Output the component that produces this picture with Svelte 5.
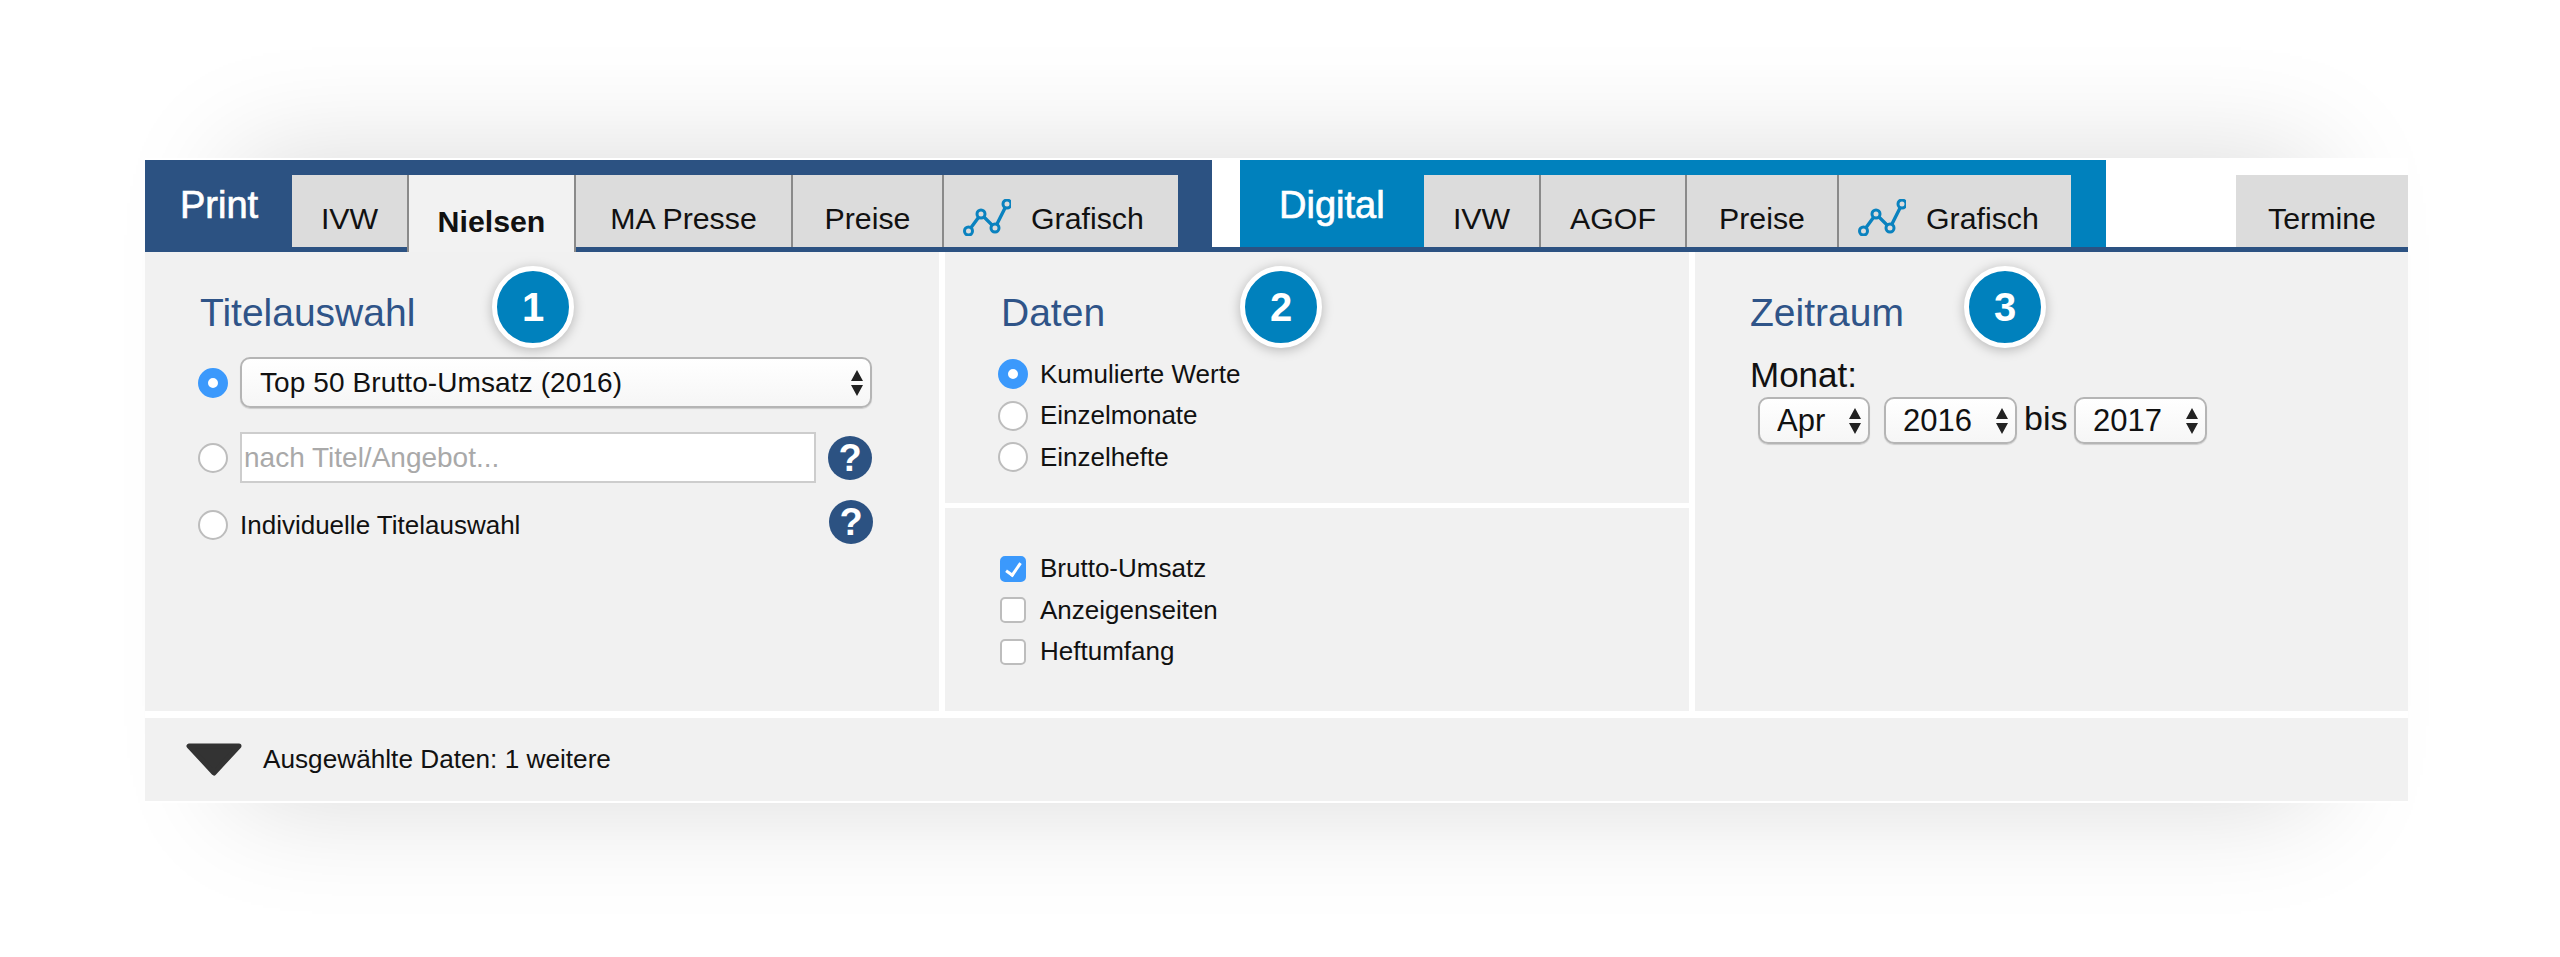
<script>
    const printTabs = [
        { label: 'IVW', w: 115 },
        { label: 'Nielsen', w: 169, active: true },
        { label: 'MA Presse', w: 217 },
        { label: 'Preise', w: 151 },
        { label: 'Grafisch', w: 236, chart: true }
    ];
    const digitalTabs = [
        { label: 'IVW', w: 115 },
        { label: 'AGOF', w: 146 },
        { label: 'Preise', w: 152 },
        { label: 'Grafisch', w: 234, chart: true }
    ];
    const dataRadios = ['Kumulierte Werte', 'Einzelmonate', 'Einzelhefte'];
    const dataChecks = ['Brutto-Umsatz', 'Anzeigenseiten', 'Heftumfang'];
</script>

{#snippet tab(t)}
    <div class="tab" class:active={t.active} class:chart={t.chart} style="width: {t.w}px">
        {#if t.chart}
            <svg class="chart-icon" width="48" height="37" viewBox="0 0 48 37">
                <path d="M5.5 32L18 15L32 29L44 5" fill="none" stroke="#0a82bf" stroke-width="3.4" />
                <circle cx="5.5" cy="32" r="4" />
                <circle cx="18" cy="15" r="4" />
                <circle cx="32" cy="29" r="4" />
                <circle cx="44" cy="5" r="4" />
            </svg>
        {/if}
        <span>{t.label}</span>
    </div>
{/snippet}

{#snippet arrows()}
    <svg class="arrows" width="14" height="28" viewBox="0 0 14 28">
        <path d="M7 1L13 12H1Z M7 27L13 16H1Z" fill="#222" />
    </svg>
{/snippet}

<div class="page">
    <div class="app">
        <div class="glow"></div>
        <div class="sheet">
            <div class="tabs">
                <div class="group print">
                    <div class="group-label">Print</div>
                    {#each printTabs as t}
                        {@render tab(t)}
                    {/each}
                </div>
                <div class="group digital">
                    <div class="group-label">Digital</div>
                    {#each digitalTabs as t}
                        {@render tab(t)}
                    {/each}
                </div>
                <div class="group plain">
                    {@render tab({ label: 'Termine', w: 172 })}
                </div>
            </div>

            <div class="panels">
                <section class="panel titles">
                    <div class="badge b1">1</div>
                    <h2>Titelauswahl</h2>
                    <div class="row first">
                        <input type="radio" name="title" checked />
                        <div class="select wide">
                            <select>
                                <option>Top 50 Brutto-Umsatz (2016)</option>
                            </select>
                            {@render arrows()}
                        </div>
                    </div>
                    <div class="row second">
                        <input type="radio" name="title" />
                        <input class="search" type="text" placeholder="nach Titel/Angebot..." />
                        <span class="help">?</span>
                    </div>
                    <div class="row third">
                        <input type="radio" name="title" />
                        <span>Individuelle Titelauswahl</span>
                        <span class="help up">?</span>
                    </div>
                </section>

                <section class="panel stack">
                    <div class="block upper">
                        <div class="badge b2">2</div>
                        <h2 class="daten">Daten</h2>
                        {#each dataRadios as r, i}
                            <div class="option">
                                <input type="radio" name="data" checked={i === 0} />
                                <span>{r}</span>
                            </div>
                        {/each}
                    </div>
                    <div class="block lower">
                        {#each dataChecks as c, i}
                            <div class="option">
                                <input type="checkbox" checked={i === 0} />
                                <span>{c}</span>
                            </div>
                        {/each}
                    </div>
                </section>

                <section class="panel period">
                    <div class="badge b3">3</div>
                    <h2>Zeitraum</h2>
                    <div class="month">Monat:</div>
                    <div class="range">
                        <div class="select apr">
                            <select><option>Apr</option></select>
                            {@render arrows()}
                        </div>
                        <div class="select year">
                            <select><option>2016</option></select>
                            {@render arrows()}
                        </div>
                        <span class="bis">bis</span>
                        <div class="select year">
                            <select><option>2017</option></select>
                            {@render arrows()}
                        </div>
                    </div>
                </section>
            </div>

            <div class="footer">
                <svg width="56" height="33" viewBox="0 0 56 33">
                    <path d="M3 3H53L28 30Z" fill="#333" stroke="#333" stroke-width="5" stroke-linejoin="round" />
                </svg>
                <span>Ausgewählte Daten: 1 weitere</span>
            </div>
        </div>
    </div>
</div>

<style>
    :global(body) {
        margin: 0;
        background: #fff;
        font-family: "Liberation Sans", Arial, sans-serif;
        color: #111;
    }

    .page {
        box-sizing: border-box;
        height: 957px;
        padding: 158px 0 0 145px;
        overflow: hidden;
    }

    .app {
        position: relative;
        width: 2263px;
    }

    /* soft shadow, narrower than the sheet so it dies out at the edges */
    .glow {
        position: absolute;
        top: 0;
        left: 90px;
        width: 2083px;
        height: 645px;
        box-shadow: 0 0 110px rgba(0, 0, 0, 0.15);
    }

    .sheet {
        position: relative;
        background: #fff;
        padding: 2px 0;
    }

    .tabs {
        display: flex;
        height: 87px;
        border-bottom: 5px solid #2c5282;
    }

    .group {
        display: flex;
        padding-top: 15px;
    }

    .print {
        background: #2c5282;
        padding-right: 34px;
    }

    .digital {
        background: #0081bd;
        padding-right: 35px;
        margin-left: 28px;
    }

    .plain {
        margin-left: auto;
    }

    .group-label {
        color: #fff;
        font-size: 38px;
        line-height: 60px;
        -webkit-text-stroke: 0.7px #fff;
    }

    .print .group-label {
        width: 112px;
        padding-left: 35px;
    }

    .digital .group-label {
        width: 145px;
        padding-left: 39px;
    }

    .tab {
        box-sizing: border-box;
        display: flex;
        justify-content: center;
        align-items: center;
        padding-top: 16px;
        background: #dcdcdc;
        border-left: 2px solid #8a8a8a;
        font-size: 30.3px;
    }

    .group-label + .tab,
    .plain .tab {
        border-left: none;
    }

    .tab.active {
        height: 77px;
        background: #f2f2f2;
        font-weight: 700;
        border-right: 2px solid #8a8a8a;
        margin-right: -2px;
        position: relative;
    }

    .tab.chart {
        justify-content: flex-start;
        padding-left: 19px;
        gap: 20px;
    }

    .chart-icon {
        margin-top: -4px;
    }

    .chart-icon circle {
        fill: #dcdcdc;
        stroke: #0a82bf;
        stroke-width: 3;
    }

    .panels {
        display: grid;
        grid-template-columns: 794px 744px 713px;
        column-gap: 6px;
        height: 459px;
    }

    .panel {
        position: relative;
        box-sizing: border-box;
        background: #f1f1f1;
    }

    h2 {
        margin: 0;
        font-size: 39px;
        line-height: 44px;
        font-weight: 400;
        color: #2f5488;
    }

    .titles {
        padding: 39px 66px 0 53px;
    }

    .titles h2 {
        margin: 0 0 22px 2px;
    }

    .row {
        display: flex;
        align-items: center;
        gap: 12px;
        font-size: 26px;
    }

    .first {
        height: 51px;
    }

    .second {
        height: 51px;
        margin-top: 24px;
    }

    .third {
        height: 44px;
        margin-top: 20px;
    }

    input[type="radio"] {
        appearance: none;
        flex: none;
        box-sizing: border-box;
        width: 30px;
        height: 30px;
        margin: 0;
        border: 2px solid #bdbdbd;
        border-radius: 50%;
        background: #fff;
    }

    input[type="radio"]:checked {
        border: 10px solid #3b99fc;
    }

    input[type="checkbox"] {
        appearance: none;
        flex: none;
        box-sizing: border-box;
        position: relative;
        width: 26px;
        height: 26px;
        margin: 0 2px;
        border: 2px solid #bdbdbd;
        border-radius: 5px;
        background: #fff;
    }

    input[type="checkbox"]:checked {
        border-color: #3b99fc;
        background: #3b99fc;
    }

    input[type="checkbox"]:checked::after {
        content: "";
        position: absolute;
        left: 7px;
        top: 2px;
        width: 6px;
        height: 13px;
        border: solid #fff;
        border-width: 0 3px 3px 0;
        transform: rotate(35deg);
    }

    .select {
        position: relative;
        box-sizing: border-box;
    }

    .select select {
        appearance: none;
        box-sizing: border-box;
        width: 100%;
        height: 100%;
        margin: 0;
        border: 2px solid #b5b5b5;
        border-radius: 10px;
        background: linear-gradient(#fff, #f6f6f6);
        box-shadow: 0 1px 1px rgba(0, 0, 0, 0.15);
        font-family: inherit;
        color: #111;
    }

    .arrows {
        position: absolute;
        right: 8px;
        top: 50%;
        transform: translateY(-50%);
    }

    .wide {
        width: 632px;
        height: 51px;
    }

    .wide select {
        padding-left: 18px;
        font-size: 28px;
        letter-spacing: 0.1px;
    }

    .search {
        box-sizing: border-box;
        width: 576px;
        height: 51px;
        padding: 0 2px;
        border: 2px solid #cdcdcd;
        background: #fff;
        font-family: inherit;
        font-size: 28px;
        outline: none;
    }

    .search::placeholder {
        color: #a9a9a9;
    }

    .help {
        flex: none;
        width: 44px;
        height: 44px;
        border-radius: 50%;
        background: #2c5282;
        color: #fff;
        font-size: 38px;
        font-weight: 700;
        line-height: 44px;
        text-align: center;
    }

    .third .help {
        margin-left: auto;
    }

    .help.up {
        margin-top: -6px;
    }

    .stack {
        display: flex;
        flex-direction: column;
        gap: 5px;
        background: #fff;
    }

    .block {
        position: relative;
        background: #f1f1f1;
        padding-left: 53px;
    }

    .upper {
        height: 251px;
        padding-top: 39px;
        box-sizing: border-box;
    }

    .lower {
        flex: 1;
        padding-top: 40px;
    }

    .daten {
        margin: 0 0 24px 3px;
    }

    .option {
        display: flex;
        align-items: center;
        gap: 12px;
        height: 41.5px;
        font-size: 26px;
    }

    .upper .option {
        height: 30px;
        margin-bottom: 11.5px;
    }

    .period {
        padding: 39px 0 0 55px;
    }

    .month {
        margin-top: 20px;
        font-size: 35px;
        line-height: 40px;
    }

    .range {
        display: flex;
        align-items: flex-start;
        margin: 2px 0 0 8px;
    }

    .range select {
        padding-left: 17px;
        font-size: 31px;
    }

    .apr {
        width: 112px;
        height: 47px;
        margin-right: 14px;
    }

    .year {
        width: 133px;
        height: 47px;
    }

    .bis {
        width: 57px;
        padding-left: 7px;
        box-sizing: border-box;
        font-size: 34px;
        line-height: 42px;
    }

    .badge {
        position: absolute;
        z-index: 1;
        top: 14px;
        box-sizing: border-box;
        width: 82px;
        height: 82px;
        border: 5px solid #fff;
        border-radius: 50%;
        background: #0081bd;
        box-shadow: 0 2px 12px rgba(0, 0, 0, 0.25);
        color: #fff;
        font-size: 40px;
        font-weight: 700;
        line-height: 72px;
        text-align: center;
    }

    .b1 {
        left: 347px;
    }

    .b2 {
        left: 295px;
    }

    .b3 {
        left: 269px;
    }

    .footer {
        display: flex;
        align-items: center;
        gap: 21px;
        height: 83px;
        margin-top: 7px;
        padding-left: 41px;
        background: #f1f1f1;
        font-size: 26.2px;
    }
</style>
